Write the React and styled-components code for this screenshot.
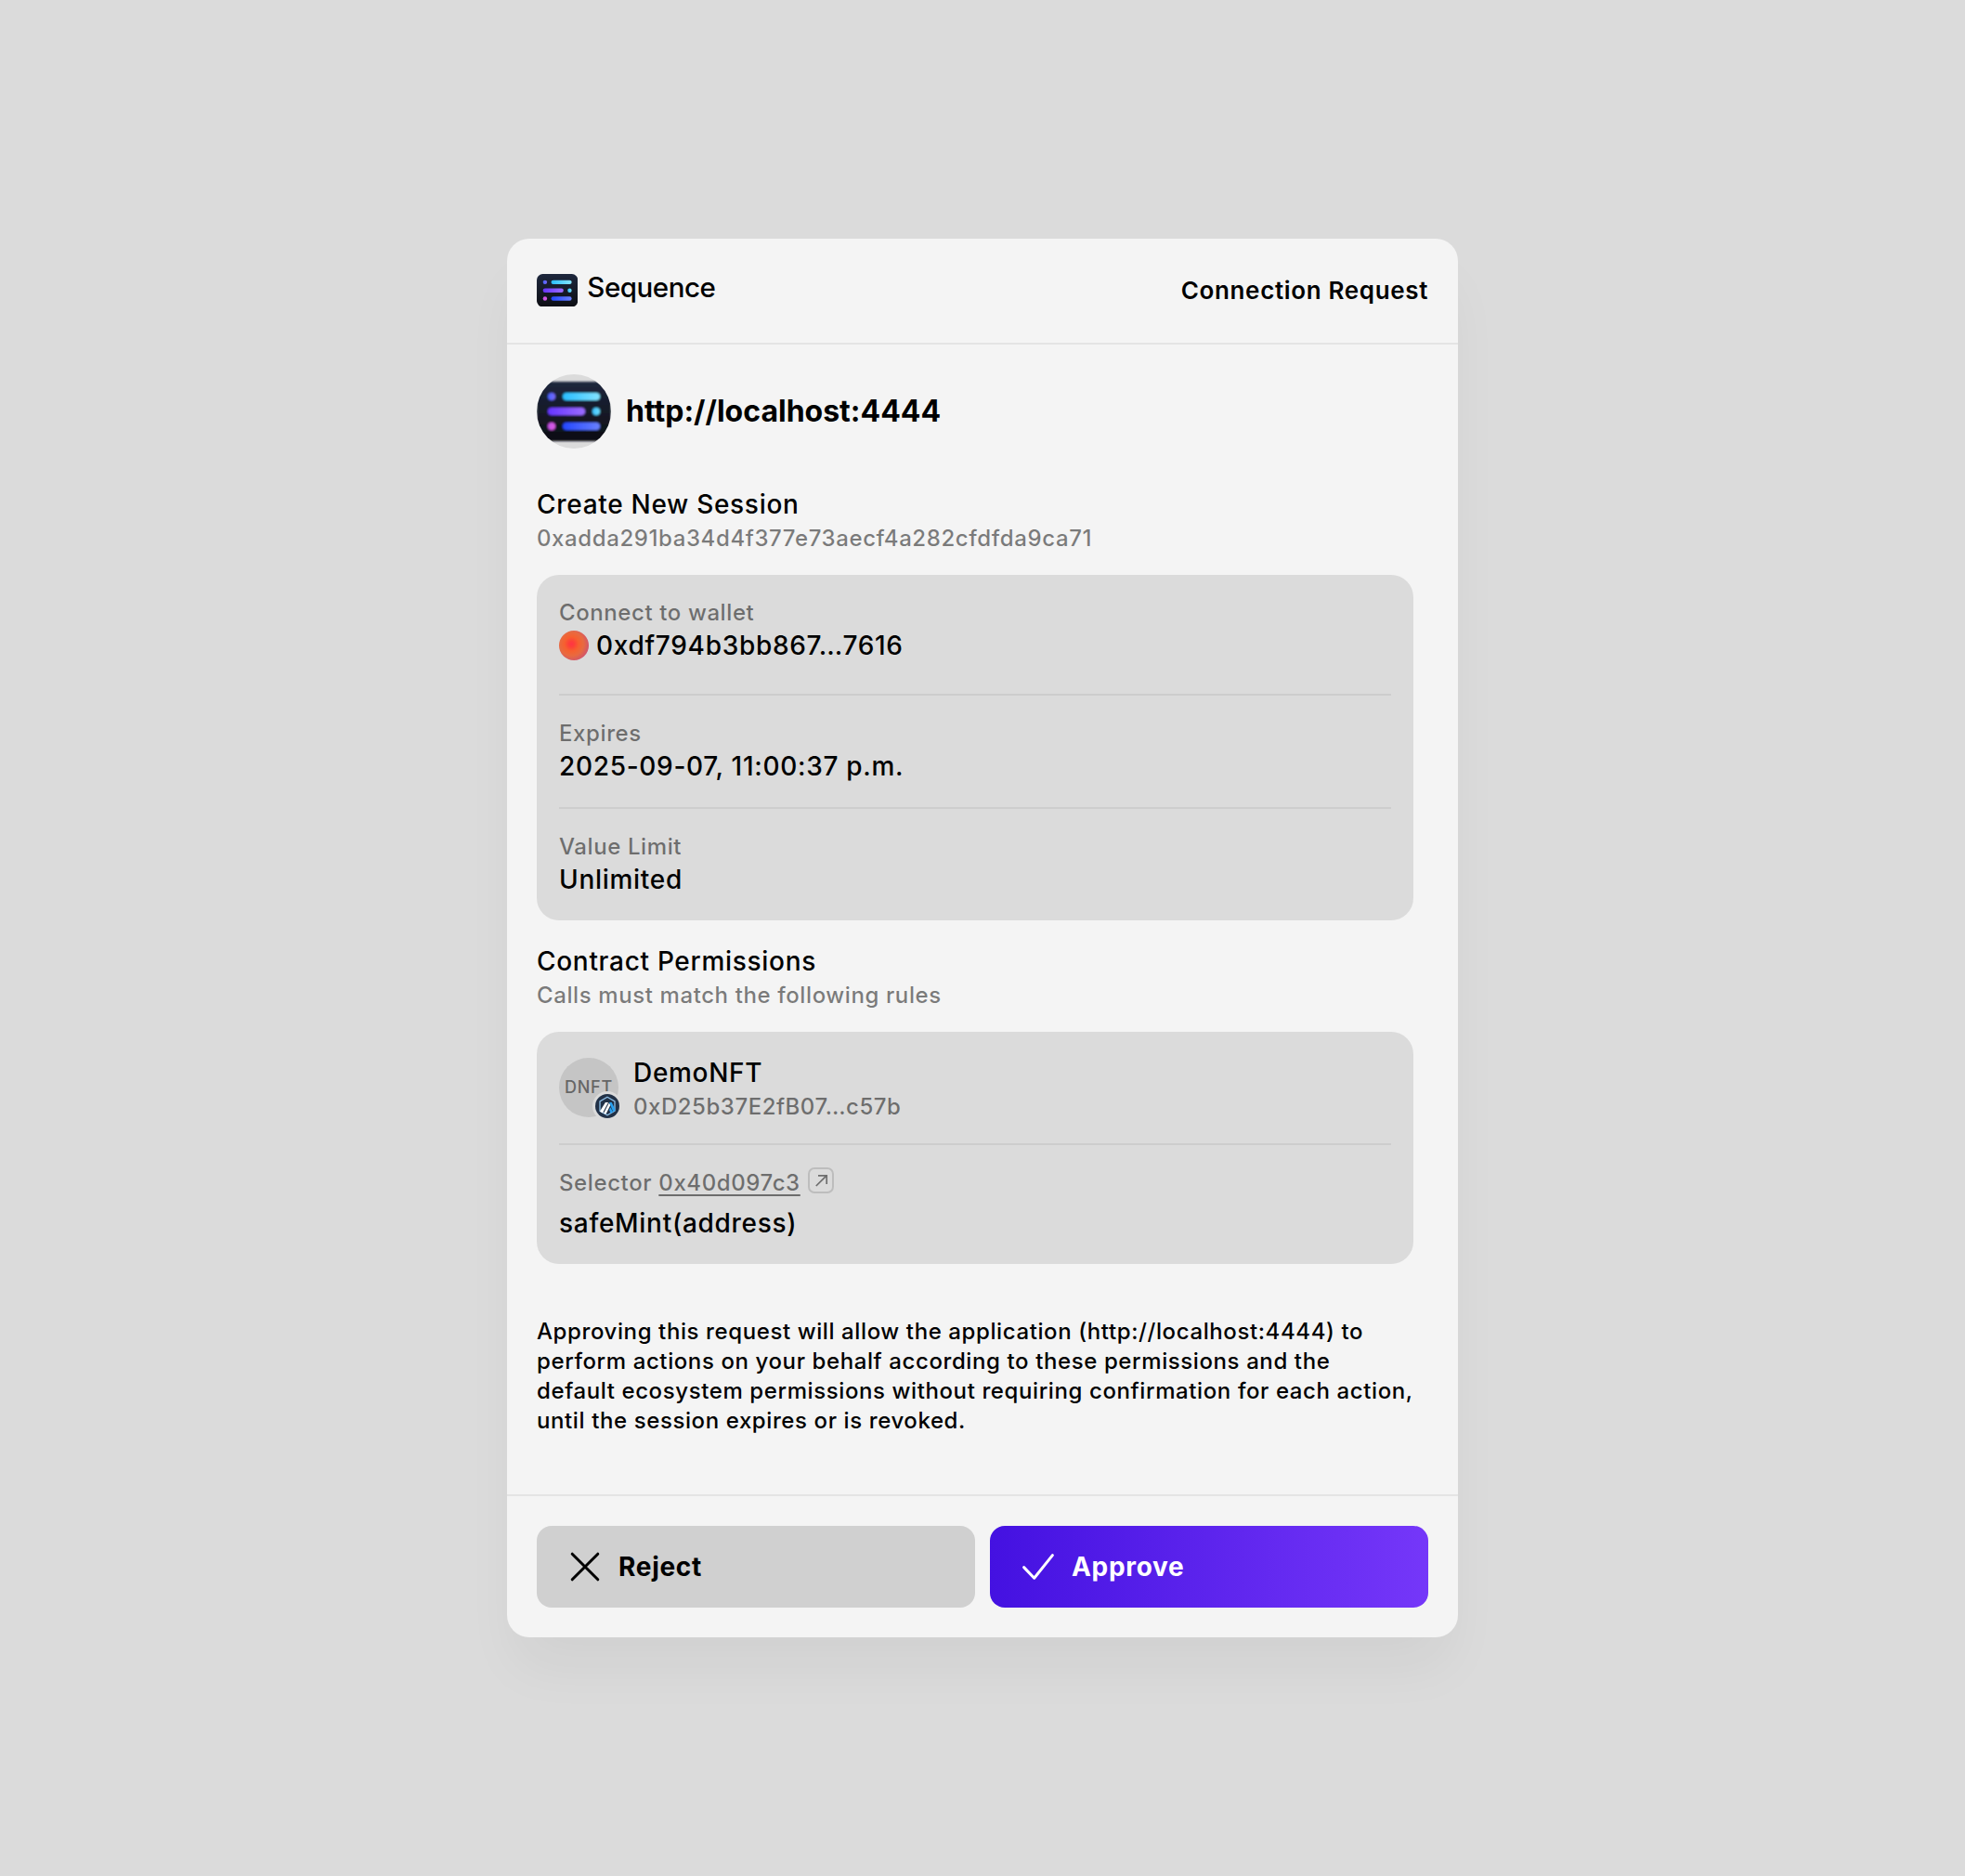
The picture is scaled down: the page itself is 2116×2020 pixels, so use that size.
import React from "react";
import styled, { createGlobalStyle } from "styled-components";

const GlobalStyle = createGlobalStyle`
  * { box-sizing: border-box; }
  body {
    margin: 0;
    background: #dbdbdb;
    color: #000;
    font-family: Inter, "Liberation Sans", sans-serif;
  }
`;

const Page = styled.main`
  min-height: 2020px;
  display: flex;
  align-items: center;
  justify-content: center;
`;

const Card = styled.section`
  width: 1024px;
  display: flex;
  flex-direction: column;
  background: #f4f4f4;
  border-radius: 24px;
  box-shadow: 0 40px 60px -10px rgba(0, 0, 0, 0.05);
`;

const Header = styled.header`
  height: 114px;
  padding: 0 32px;
  display: flex;
  align-items: center;
  justify-content: space-between;
  border-bottom: 2px solid #e4e4e4;
`;

const Brand = styled.div`
  display: flex;
  align-items: center;
  gap: 10px;
`;

const BrandMark = styled.svg`
  display: block;
  width: 44.3px;
  height: 35.4px;
  margin-bottom: 1.4px;
`;

const BrandName = styled.span`
  font-size: 29.5px;
  line-height: 36px;
  font-weight: 500;
  letter-spacing: -0.45px;
  margin-bottom: 8px;
`;

const HeaderTitle = styled.h1`
  margin: 0;
  font-size: 26px;
  line-height: 36px;
  font-weight: 600;
  letter-spacing: 0.025em;
`;

const Body = styled.div`
  padding: 32px 48px 63px 32px;
`;

const Origin = styled.div`
  display: flex;
  align-items: center;
  gap: 16px;
  margin-bottom: 42px;
`;

const OriginAvatar = styled.div`
  width: 80px;
  height: 80px;
  border-radius: 50%;
  overflow: hidden;
  background: #dbdbdb;
  display: flex;
  align-items: center;
`;

const OriginLogo = styled.svg`
  display: block;
  width: 80px;
  height: 80px;
`;

const OriginName = styled.h2`
  margin: 0;
  font-size: 32px;
  line-height: 40px;
  font-weight: 700;
`;

const Strong = styled.div`
  font-size: 28px;
  line-height: 36px;
  font-weight: 500;
  letter-spacing: 0.025em;
`;

const Muted = styled.div`
  font-size: 24px;
  line-height: 37px;
  margin-bottom: -1px;
  font-weight: 500;
  letter-spacing: ${(p) => p.$tracking || "0.025em"};
  color: rgba(0, 0, 0, 0.5);
`;

const SectionHead = styled.div`
  display: flow-root;
  margin: ${(p) => (p.$spaced ? "26px 0 22px" : "0 0 22px")};
`;

const Panel = styled.div`
  padding: 0 24px;
  border-radius: 24px;
  background: #dbdbdb;
`;

const Field = styled.div`
  padding: 22px 0 ${(p) => p.$bottom || 26}px;
  & + & {
    border-top: 2px solid #cdcdcd;
  }
`;

const WalletValue = styled.div`
  display: flex;
  align-items: center;
  gap: 8px;
`;

const WalletDot = styled.span`
  width: 32px;
  height: 32px;
  border-radius: 50%;
  background: radial-gradient(
    circle at 42% 45%,
    #ff3545 0%,
    #fd4039 12%,
    #f6602f 30%,
    #e86a40 50%,
    #d95c5c 66%,
    #c8507a 80%
  );
`;

const Contract = styled.div`
  display: flex;
  align-items: center;
  gap: 16px;
  padding: 26px 0 22px;
  & + ${Field} {
    border-top: 2px solid #cdcdcd;
  }
`;

const ContractText = styled.div`
  display: flow-root;
`;

const TokenAvatar = styled.div`
  position: relative;
  top: -2px;
  width: 64px;
  height: 64px;
  border-radius: 50%;
  background: #c5c5c5;
  display: flex;
  align-items: center;
  justify-content: center;
  font-size: 18px;
  line-height: 24px;
  font-weight: 500;
  letter-spacing: 0.04em;
  color: #666;
`;

const NetworkBadge = styled.span`
  position: absolute;
  right: -4px;
  bottom: -4px;
  width: 32px;
  height: 32px;
  padding: 3px;
  border-radius: 50%;
  background: #dbdbdb;
`;

const NetworkIcon = styled.svg`
  display: block;
  width: 26px;
  height: 26px;
`;

const SelectorLine = styled.div`
  display: flex;
  align-items: center;
  height: 36px;
  margin-bottom: 8px;
`;

const SelectorLink = styled.a`
  margin-left: 0.3em;
  color: inherit;
  text-decoration: underline;
  text-decoration-thickness: 2px;
  text-underline-offset: 4px;
`;

const OpenIcon = styled.svg`
  display: block;
  width: 28px;
  height: 28px;
  margin: 0 0 4px 8px;
`;

const Notice = styled.p`
  margin: 57px 0 0;
  font-size: 24px;
  line-height: 32px;
  font-weight: 500;
  letter-spacing: 0.025em;
`;

const Footer = styled.footer`
  display: grid;
  grid-template-columns: 1fr 1fr;
  gap: 16px;
  padding: 32px;
  border-top: 2px solid #e4e4e4;
`;

const Action = styled.button`
  height: 88px;
  display: flex;
  align-items: center;
  gap: 20px;
  padding: 0 35px;
  border: 0;
  border-radius: 16px;
  font: 700 28px/36px Inter, "Liberation Sans", sans-serif;
  letter-spacing: 0.025em;
  color: ${(p) => (p.$primary ? "#fff" : "#000")};
  background: ${(p) =>
    p.$primary ? "linear-gradient(90deg, #4411e1, #7537f9)" : "#d0d0d0"};
`;

const ActionIcon = styled.svg`
  display: block;
  overflow: visible;
  width: 33px;
  height: 32px;
  fill: none;
  stroke: currentColor;
  stroke-width: 3;
  stroke-linecap: round;
  stroke-linejoin: round;
`;

function LogoArt({ id }) {
  const grad = (name, from, to) => (
    <linearGradient id={`${id}-${name}`}>
      <stop offset="0" stopColor={from} />
      <stop offset="1" stopColor={to} />
    </linearGradient>
  );
  return (
    <>
      <defs>
        <linearGradient id={`${id}-bg`} x1="0" y1="0" x2="0" y2="1">
          <stop offset="0" stopColor="#1d273d" />
          <stop offset="1" stopColor="#0d0e13" />
        </linearGradient>
        {grad("blue", "#4462fe", "#7d69fa")}
        {grad("cyan", "#29bdff", "#84e4ff")}
        {grad("violet", "#6634ff", "#9c6dff")}
        {grad("aqua", "#3bc0ff", "#6fe0ff")}
        {grad("pink", "#c34fe6", "#dd5fe6")}
        {grad("indigo", "#2447ff", "#6980ff")}
      </defs>
      <rect width="400" height="320" rx="58" fill={`url(#${id}-bg)`} />
      <circle cx="80" cy="80" r="20" fill={`url(#${id}-blue)`} />
      <rect x="140" y="60" width="200" height="40" rx="20" fill={`url(#${id}-cyan)`} />
      <rect x="60" y="140" width="200" height="40" rx="20" fill={`url(#${id}-violet)`} />
      <circle cx="320" cy="160" r="20" fill={`url(#${id}-aqua)`} />
      <circle cx="80" cy="240" r="20" fill={`url(#${id}-pink)`} />
      <rect x="140" y="220" width="200" height="40" rx="20" fill={`url(#${id}-indigo)`} />
    </>
  );
}

export default function App() {
  return (
    <>
      <GlobalStyle />
      <Page>
        <Card>
          <Header>
            <Brand>
              <BrandMark viewBox="0 0 400 320">
                <LogoArt id="brand" />
              </BrandMark>
              <BrandName>Sequence</BrandName>
            </Brand>
            <HeaderTitle>Connection Request</HeaderTitle>
          </Header>

          <Body>
            <Origin>
              <OriginAvatar>
                <OriginLogo viewBox="0 -40 400 400">
                  <filter id="soft" x="-5%" y="-5%" width="110%" height="110%">
                    <feGaussianBlur stdDeviation="4.5" />
                  </filter>
                  <g filter="url(#soft)">
                    <LogoArt id="origin" />
                  </g>
                </OriginLogo>
              </OriginAvatar>
              <OriginName>http://localhost:4444</OriginName>
            </Origin>

            <SectionHead>
              <Strong>Create New Session</Strong>
              <Muted>0xadda291ba34d4f377e73aecf4a282cfdfda9ca71</Muted>
            </SectionHead>
            <Panel>
              <Field $bottom={34}>
                <Muted>Connect to wallet</Muted>
                <WalletValue>
                  <WalletDot />
                  <Strong>0xdf794b3bb867…7616</Strong>
                </WalletValue>
              </Field>
              <Field>
                <Muted>Expires</Muted>
                <Strong>2025-09-07, 11:00:37 p.m.</Strong>
              </Field>
              <Field>
                <Muted>Value Limit</Muted>
                <Strong>Unlimited</Strong>
              </Field>
            </Panel>

            <SectionHead $spaced>
              <Strong>Contract Permissions</Strong>
              <Muted>Calls must match the following rules</Muted>
            </SectionHead>
            <Panel>
              <Contract>
                <TokenAvatar>
                  DNFT
                  <NetworkBadge>
                    <NetworkIcon viewBox="0 0 26 26">
                      <circle cx="13" cy="13" r="13" fill="#213147" />
                      <path
                        d="M13 3.2 L21 7.9 V18.1 L13 22.8 L5 18.1 V7.9 Z"
                        fill="none"
                        stroke="#8fbfe6"
                        strokeWidth="1.3"
                      />
                      <path d="M10.9 9 H14 L7.9 20.4 L4.9 18.7 Z" fill="#fff" />
                      <path d="M14.8 9.4 L16.3 12 L11.6 21.4 L9 21 Z" fill="#fff" />
                      <path d="M15 9 H17.6 L21.3 16 V18 L19.3 19.2 Z" fill="#28a0f0" />
                      <path d="M16.4 14.2 L19 19.4 L16.6 20.8 L15 17 Z" fill="#28a0f0" />
                    </NetworkIcon>
                  </NetworkBadge>
                </TokenAvatar>
                <ContractText>
                  <Strong>DemoNFT</Strong>
                  <Muted $tracking="0.022em">0xD25b37E2fB07…c57b</Muted>
                </ContractText>
              </Contract>
              <Field>
                <SelectorLine>
                  <Muted>
                    Selector<SelectorLink>0x40d097c3</SelectorLink>
                  </Muted>
                  <OpenIcon viewBox="0 0 28 28" fill="none">
                    <rect x="1" y="1" width="26" height="26" rx="6" stroke="#bdbdbd" strokeWidth="2" />
                    <path d="M8.8 20 L20 8.9 M11 8.9 H20.2 V18" stroke="#6e6e6e" strokeWidth="1.7" />
                  </OpenIcon>
                </SelectorLine>
                <Strong>safeMint(address)</Strong>
              </Field>
            </Panel>

            <Notice>
              Approving this request will allow the application (http://localhost:4444) to
              perform actions on your behalf according to these permissions and the
              default ecosystem permissions without requiring confirmation for each action,
              until the session expires or is revoked.
            </Notice>
          </Body>

          <Footer>
            <Action>
              <ActionIcon viewBox="0 0 33 32">
                <path d="M3.2 2.2 L30.8 29.8 M30.8 2.2 L3.2 29.8" />
              </ActionIcon>
              Reject
            </Action>
            <Action $primary>
              <ActionIcon viewBox="0 0 33 32">
                <path d="M1.6 16.6 L12.7 28.2 L32.4 3.6" />
              </ActionIcon>
              Approve
            </Action>
          </Footer>
        </Card>
      </Page>
    </>
  );
}
